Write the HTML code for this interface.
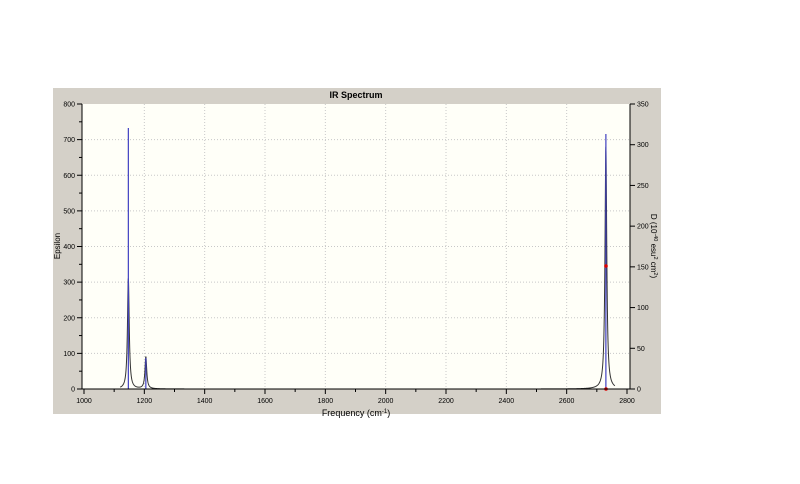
<!DOCTYPE html>
<html><head><meta charset="utf-8"><style>
html,body{margin:0;padding:0;background:#fff;width:800px;height:484px;overflow:hidden}
svg{position:absolute;left:0;top:0}
text{font-family:"Liberation Sans",sans-serif}
</style></head><body>
<svg width="800" height="484" viewBox="0 0 800 484">
<rect x="53" y="88" width="608" height="326" fill="#d4d0c8"/>
<text x="356" y="98" font-size="9" font-weight="bold" text-anchor="middle" fill="#000">IR Spectrum</text>
<rect x="82" y="104" width="548" height="285" fill="#fffff8"/>
<g id="grid" stroke="#c8c8c8" stroke-dasharray="1,2" stroke-width="1"></g>
<path id="curve" fill="none" stroke="#333" stroke-width="1"/>
<g id="sticks" stroke="#4040c0" stroke-width="1.2"></g>
<circle cx="606" cy="266" r="1.8" fill="#d00"/>
<circle cx="606" cy="389" r="1.8" fill="#d00"/>
<line x1="82" y1="104" x2="82" y2="389" stroke="#000"/>
<line x1="82" y1="389" x2="630" y2="389" stroke="#000"/>
<line x1="630" y1="104" x2="630" y2="389" stroke="#000"/>
<g id="ticks" stroke="#000" stroke-width="1"></g>
<g id="labels" font-size="7" fill="#000"></g>
<text transform="translate(60,246) rotate(-90)" font-size="8" text-anchor="middle">Epsilon</text>
<text transform="translate(651,246) rotate(90)" font-size="8" text-anchor="middle">D (10<tspan font-size="5.5" dy="-3">-40</tspan><tspan dy="3"> esu</tspan><tspan font-size="5.5" dy="-3">2</tspan><tspan dy="3"> cm</tspan><tspan font-size="5.5" dy="-3">2</tspan><tspan dy="3">)</tspan></text>
<text x="356" y="416" font-size="9" text-anchor="middle">Frequency (cm<tspan font-size="6" dy="-3">-1</tspan><tspan dy="3">)</tspan></text>
</svg>
<script>
var ns="http://www.w3.org/2000/svg";
function X(f){return 84+(f-1000)*(543/1800);}
function YL(v){return 389-v*285/800;}
function YR(v){return 389-v*285/350;}
function el(p,t,a,txt){var e=document.createElementNS(ns,t);for(var k in a)e.setAttribute(k,a[k]);if(txt)e.textContent=txt;document.getElementById(p).appendChild(e);}
for(var f=1200;f<=2600;f+=200)el("grid","line",{x1:X(f),y1:104,x2:X(f),y2:389});
for(var v=100;v<800;v+=100)el("grid","line",{x1:82,y1:YL(v),x2:630,y2:YL(v)});
for(var f=1000;f<=2800;f+=100){var L=f%200==0?5:3;el("ticks","line",{x1:X(f),y1:389,x2:X(f),y2:389+L});if(f%200==0)el("labels","text",{x:X(f),y:403,"text-anchor":"middle"},""+f);}
for(var v=0;v<=800;v+=50){var L=v%100==0?5:3;el("ticks","line",{x1:82-L,y1:YL(v),x2:82,y2:YL(v)});if(v%100==0)el("labels","text",{x:75,y:YL(v)+2.5,"text-anchor":"end"},""+v);}
for(var v=0;v<=350;v+=50){el("ticks","line",{x1:630,y1:YR(v),x2:635,y2:YR(v)});el("labels","text",{x:637,y:YR(v)+2.5},""+v);}
var pk=[[1147,310,3.5],[1205,90,3.5],[2730,680,3.5]];
var d="";
for(var f=1120;f<=2760;f+=0.5){var s=0;for(var i=0;i<pk.length;i++){var g=pk[i][2];s+=pk[i][1]*g*g/((f-pk[i][0])*(f-pk[i][0])+g*g);}
d+=(d?"L":"M")+X(f).toFixed(2)+","+YL(s).toFixed(2);}
document.getElementById("curve").setAttribute("d",d);
el("sticks","line",{x1:X(1147),y1:389,x2:X(1147),y2:128});
el("sticks","line",{x1:X(1205),y1:389,x2:X(1205),y2:358});
el("sticks","line",{x1:X(2730),y1:389,x2:X(2730),y2:134});
</script>
</body></html>
